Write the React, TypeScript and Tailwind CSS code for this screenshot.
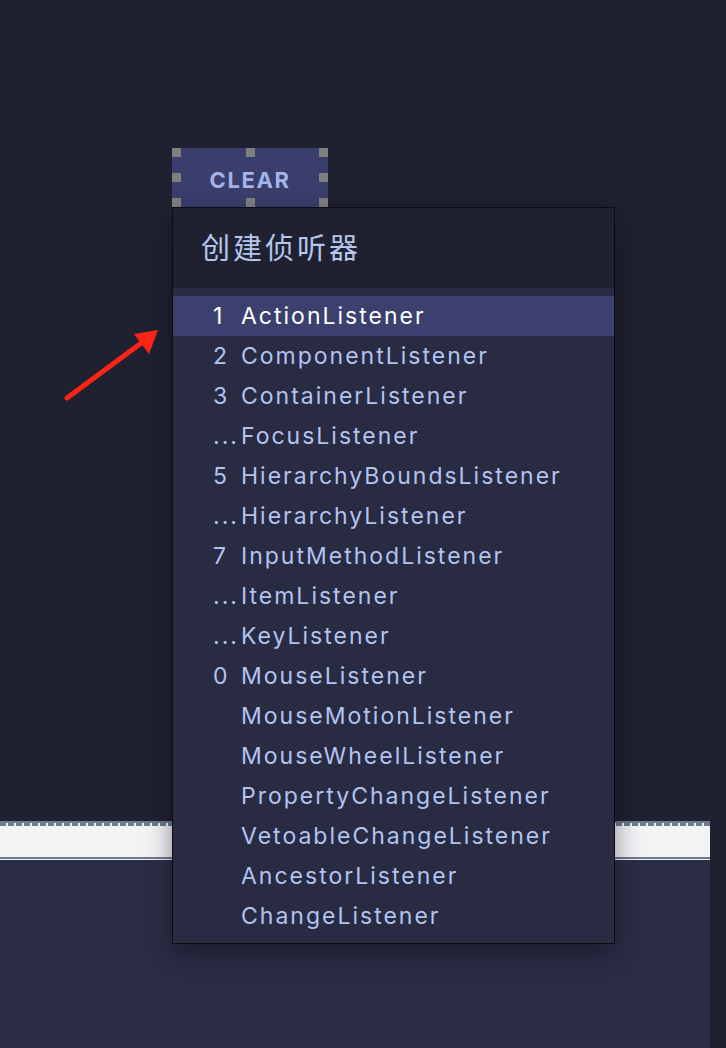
import React from 'react';

const items: { key: string; name: string }[] = [
  { key: '1', name: 'ActionListener' },
  { key: '2', name: 'ComponentListener' },
  { key: '3', name: 'ContainerListener' },
  { key: '...', name: 'FocusListener' },
  { key: '5', name: 'HierarchyBoundsListener' },
  { key: '...', name: 'HierarchyListener' },
  { key: '7', name: 'InputMethodListener' },
  { key: '...', name: 'ItemListener' },
  { key: '...', name: 'KeyListener' },
  { key: '0', name: 'MouseListener' },
  { key: '', name: 'MouseMotionListener' },
  { key: '', name: 'MouseWheelListener' },
  { key: '', name: 'PropertyChangeListener' },
  { key: '', name: 'VetoableChangeListener' },
  { key: '', name: 'AncestorListener' },
  { key: '', name: 'ChangeListener' },
];

const Handle: React.FC<{ className: string }> = ({ className }) => (
  <div className={`absolute w-[9px] h-[9px] bg-[#7f7f80] ${className}`} />
);

export default function App() {
  return (
    <div
      className="relative w-[726px] h-[1048px] overflow-hidden bg-[#1f2130] flex flex-col"
      style={{ fontFamily: 'Inter, "Noto Sans CJK SC", sans-serif' }}
    >
      {/* Design canvas */}
      <div className="h-[821px] shrink-0" />

      {/* Bottom strip + panel */}
      <div className="flex flex-1">
        <div className="flex-1 flex flex-col">
          <div className="h-[2px] bg-[#6b7a8c]" />
          <div className="h-[3px] bg-[#f3f2f5] bg-[repeating-linear-gradient(90deg,#6b7a8c_0_6px,transparent_6px_8px)]" />
          <div className="h-[31px] bg-[#f3f2f5]" />
          <div className="h-[2px] bg-[#6b7a8c]" />
          <div className="h-[1px] bg-[#f3f2f5]" />
          <div className="flex-1 bg-[#2a2d45]" />
        </div>
        <div className="w-[16px] bg-[#1f2130]" />
      </div>

      {/* CLEAR component with selection handles */}
      <div className="absolute left-[172px] top-[148px] w-[156px] h-[59px] bg-[#3a3e6c] flex items-center justify-center pt-[4px]">
        <span className="text-[22px] font-bold tracking-[1.6px] text-[#a2b4ea] leading-none">CLEAR</span>
        <Handle className="left-0 top-0" />
        <Handle className="left-[74px] top-0" />
        <Handle className="right-0 top-0" />
        <Handle className="left-0 top-[25px]" />
        <Handle className="right-0 top-[25px]" />
        <Handle className="left-0 top-[50px]" />
        <Handle className="left-[74px] top-[50px]" />
        <Handle className="right-0 top-[50px]" />
      </div>

      {/* Popup menu */}
      <div className="absolute left-[172px] top-[207px] w-[443px] border border-[#0b0c12] bg-[#282b42] shadow-[0_10px_24px_rgba(10,10,20,0.45)]">
        <div className="h-[80px] bg-[#1f2130] flex items-center pl-[28px]">
          <span className="text-[29px] leading-none text-[#b6c6ee] tracking-[3px]">创建侦听器</span>
        </div>
        <div className="pt-[8px] pb-[7px]">
          {items.map((it, i) => (
            <div
              key={i}
              className={`h-[40px] flex items-center text-[23px] leading-none tracking-[2px] ${
                i === 0 ? 'bg-[#3c406e] text-white' : 'text-[#b3c3f0]'
              }`}
            >
              <span className="w-[68px] pl-[40px] shrink-0">{it.key}</span>
              <span>{it.name}</span>
            </div>
          ))}
        </div>
      </div>

      {/* Annotation arrow */}
      <svg className="absolute left-0 top-0" width="726" height="1048" viewBox="0 0 726 1048">
        <line x1="67" y1="398" x2="148" y2="338" stroke="#fb2417" strokeWidth="5" strokeLinecap="round" />
        <polygon points="158,330 134,334 149,354" fill="#fb2417" />
      </svg>
    </div>
  );
}
